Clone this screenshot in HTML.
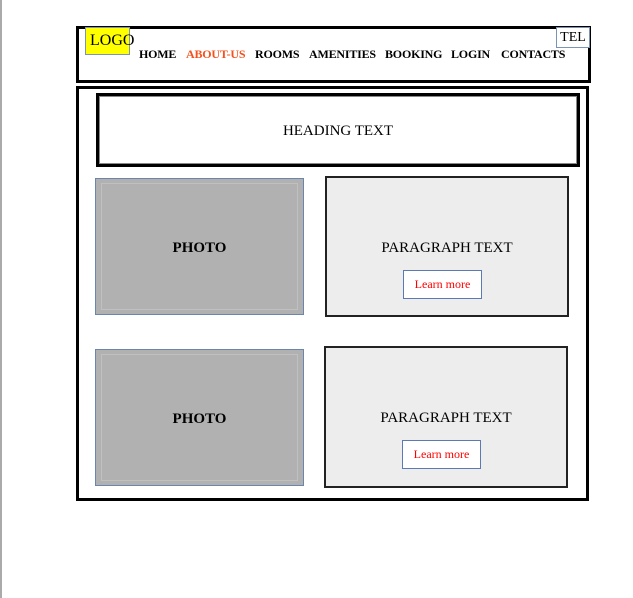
<!DOCTYPE html>
<html><head><meta charset="utf-8"><style>
*{margin:0;padding:0;box-sizing:border-box}
body{width:633px;height:598px;background:#fff;position:relative;font-family:"Liberation Serif",serif;overflow:hidden}
.a{position:absolute}
.vl{left:0;top:0;width:2px;height:598px;background:#aaa}
.hdr{left:76px;top:26px;width:515px;height:57px;border:3px solid #000}
.logo{left:85px;top:27px;width:45px;height:28px;background:#ff0;border:1px solid #7a93b8;font-size:16px;line-height:26px;padding-left:4px}
.tel{left:556px;top:27px;width:34px;height:21px;border:1px solid #7a93b8;background:#fff;font-size:14px;line-height:20px;text-align:center}
.n{position:absolute;top:47px;font-size:12px;font-weight:bold;white-space:nowrap;letter-spacing:-0.2px}
.main{left:76px;top:86px;width:513px;height:415px;border:3px solid #000}
.head{left:96px;top:93px;width:484px;height:74px;border:3px solid #000;box-shadow:inset 0 0 0 1px #888;text-align:center;font-size:15px;line-height:70px}
.photo{background:#b1b1b1;border:1px solid #6b86ad;text-align:center;font-weight:bold;font-size:15px}
.photo div{position:absolute;left:5px;top:4px;right:5px;bottom:4px;border:1px solid #c0c0c0}
.para{background:#ededed;border:2px solid #222;text-align:center;font-size:15px}
.btn{position:absolute;width:79px;height:29px;background:#fff;border:1px solid #5b7ab5;color:#f00;font-size:12px;line-height:27px;text-align:center}
</style></head><body>
<div class="a vl"></div>
<div class="a hdr"></div>
<div class="a logo">LOGO</div>
<div class="a tel">TEL</div>
<span class="n" style="left:139px">HOME</span>
<span class="n" style="left:186px;color:#f4511e">ABOUT-US</span>
<span class="n" style="left:255px">ROOMS</span>
<span class="n" style="left:309px">AMENITIES</span>
<span class="n" style="left:385px">BOOKING</span>
<span class="n" style="left:451px">LOGIN</span>
<span class="n" style="left:501px">CONTACTS</span>
<div class="a main"></div>
<div class="a head">HEADING TEXT</div>

<div class="a photo" style="left:95px;top:178px;width:209px;height:137px;line-height:139px"><div></div><span style="position:relative">PHOTO</span></div>
<div class="a para" style="left:325px;top:176px;width:244px;height:141px"><div style="position:absolute;top:62px;width:100%">PARAGRAPH TEXT</div><div class="btn" style="left:76px;top:92px">Learn more</div></div>

<div class="a photo" style="left:95px;top:349px;width:209px;height:137px;line-height:139px"><div></div><span style="position:relative">PHOTO</span></div>
<div class="a para" style="left:324px;top:346px;width:244px;height:142px"><div style="position:absolute;top:62px;width:100%">PARAGRAPH TEXT</div><div class="btn" style="left:76px;top:92px">Learn more</div></div>
</body></html>
